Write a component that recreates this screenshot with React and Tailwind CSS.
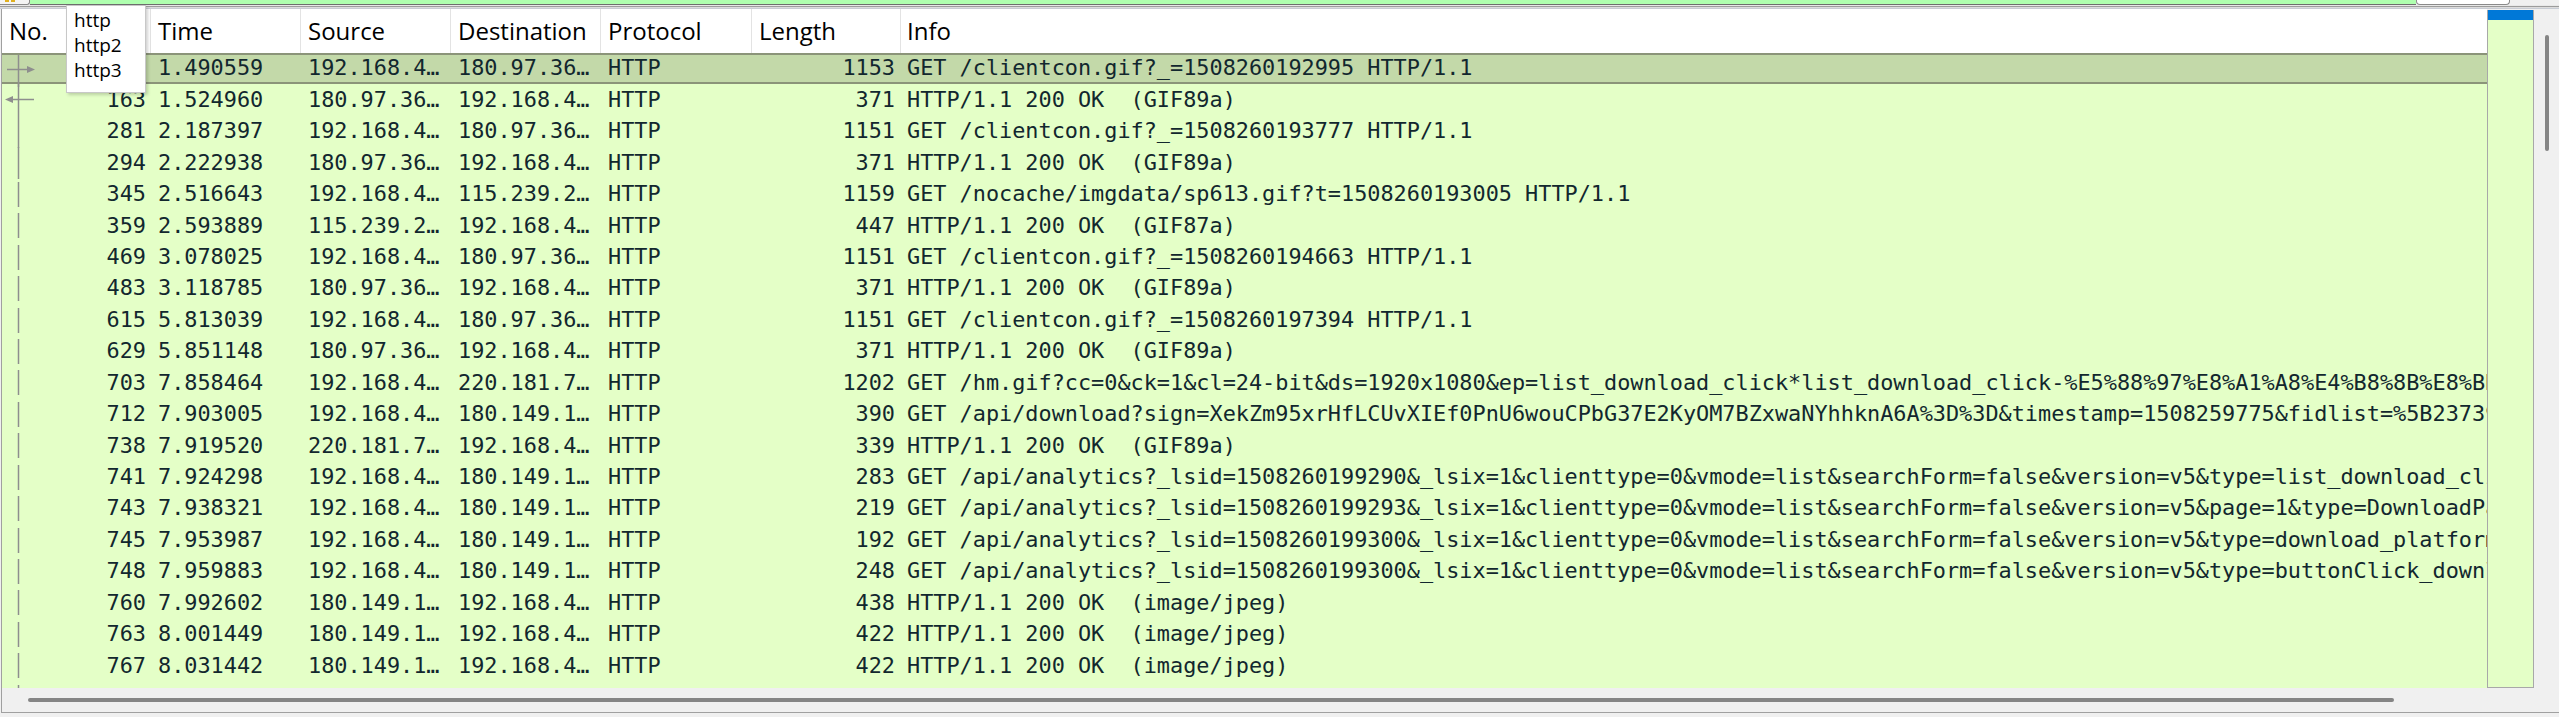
import React from 'react';

const mono = { fontFamily: '"DejaVu Sans Mono", "Liberation Mono", monospace' };
const sans = { fontFamily: '"Open Sans", "Noto Sans", sans-serif' };

const rows = [
  { no: '148', time: '1.490559', src: '192.168.4…', dst: '180.97.36…', len: '1153', info: 'GET /clientcon.gif?_=1508260192995 HTTP/1.1', sel: true, mark: 'req' },
  { no: '163', time: '1.524960', src: '180.97.36…', dst: '192.168.4…', len: '371', info: 'HTTP/1.1 200 OK  (GIF89a)', mark: 'resp' },
  { no: '281', time: '2.187397', src: '192.168.4…', dst: '180.97.36…', len: '1151', info: 'GET /clientcon.gif?_=1508260193777 HTTP/1.1', mark: 'line' },
  { no: '294', time: '2.222938', src: '180.97.36…', dst: '192.168.4…', len: '371', info: 'HTTP/1.1 200 OK  (GIF89a)', mark: 'line' },
  { no: '345', time: '2.516643', src: '192.168.4…', dst: '115.239.2…', len: '1159', info: 'GET /nocache/imgdata/sp613.gif?t=1508260193005 HTTP/1.1' },
  { no: '359', time: '2.593889', src: '115.239.2…', dst: '192.168.4…', len: '447', info: 'HTTP/1.1 200 OK  (GIF87a)' },
  { no: '469', time: '3.078025', src: '192.168.4…', dst: '180.97.36…', len: '1151', info: 'GET /clientcon.gif?_=1508260194663 HTTP/1.1' },
  { no: '483', time: '3.118785', src: '180.97.36…', dst: '192.168.4…', len: '371', info: 'HTTP/1.1 200 OK  (GIF89a)' },
  { no: '615', time: '5.813039', src: '192.168.4…', dst: '180.97.36…', len: '1151', info: 'GET /clientcon.gif?_=1508260197394 HTTP/1.1' },
  { no: '629', time: '5.851148', src: '180.97.36…', dst: '192.168.4…', len: '371', info: 'HTTP/1.1 200 OK  (GIF89a)' },
  { no: '703', time: '7.858464', src: '192.168.4…', dst: '220.181.7…', len: '1202', info: 'GET /hm.gif?cc=0&ck=1&cl=24-bit&ds=1920x1080&ep=list_download_click*list_download_click-%E5%88%97%E8%A1%A8%E4%B8%8B%E8%BD%BD%E6%8C%89%E9%92%AE&et=4&ja=0&ln=zh-cn HTTP/1.1' },
  { no: '712', time: '7.903005', src: '192.168.4…', dst: '180.149.1…', len: '390', info: 'GET /api/download?sign=XekZm95xrHfLCUvXIEf0PnU6wouCPbG37E2KyOM7BZxwaNYhhknA6A%3D%3D&timestamp=1508259775&fidlist=%5B237396527826153%5D&type=dlink HTTP/1.1' },
  { no: '738', time: '7.919520', src: '220.181.7…', dst: '192.168.4…', len: '339', info: 'HTTP/1.1 200 OK  (GIF89a)' },
  { no: '741', time: '7.924298', src: '192.168.4…', dst: '180.149.1…', len: '283', info: 'GET /api/analytics?_lsid=1508260199290&_lsix=1&clienttype=0&vmode=list&searchForm=false&version=v5&type=list_download_click HTTP/1.1' },
  { no: '743', time: '7.938321', src: '192.168.4…', dst: '180.149.1…', len: '219', info: 'GET /api/analytics?_lsid=1508260199293&_lsix=1&clienttype=0&vmode=list&searchForm=false&version=v5&page=1&type=DownloadPanel HTTP/1.1' },
  { no: '745', time: '7.953987', src: '192.168.4…', dst: '180.149.1…', len: '192', info: 'GET /api/analytics?_lsid=1508260199300&_lsix=1&clienttype=0&vmode=list&searchForm=false&version=v5&type=download_platform HTTP/1.1' },
  { no: '748', time: '7.959883', src: '192.168.4…', dst: '180.149.1…', len: '248', info: 'GET /api/analytics?_lsid=1508260199300&_lsix=1&clienttype=0&vmode=list&searchForm=false&version=v5&type=buttonClick_download HTTP/1.1' },
  { no: '760', time: '7.992602', src: '180.149.1…', dst: '192.168.4…', len: '438', info: 'HTTP/1.1 200 OK  (image/jpeg)' },
  { no: '763', time: '8.001449', src: '180.149.1…', dst: '192.168.4…', len: '422', info: 'HTTP/1.1 200 OK  (image/jpeg)' },
  { no: '767', time: '8.031442', src: '180.149.1…', dst: '192.168.4…', len: '422', info: 'HTTP/1.1 200 OK  (image/jpeg)' },
  { no: '771', time: '8.052310', src: '180.149.1…', dst: '192.168.4…', len: '422', info: 'HTTP/1.1 200 OK  (image/jpeg)' },
];

// related-packet marks drawn in the No. column
const Gutter = ({ mark }) => (
  <svg className="absolute left-0 top-0" width="40" height="32" viewBox="0 0 40 32">
    {mark ? (
      <line x1="16.5" y1="0" x2="16.5" y2="32" stroke="#8e8e8e" strokeWidth="1.5" />
    ) : (
      <line x1="16.5" y1="3" x2="16.5" y2="28" stroke="#8e8e8e" strokeWidth="1.5" />
    )}
    {mark === 'req' && (
      <>
        <line x1="5" y1="14.5" x2="27" y2="14.5" stroke="#8e8e8e" strokeWidth="1.5" />
        <path d="M25 11 L33 14.5 L25 18 Z" fill="#8e8e8e" />
      </>
    )}
    {mark === 'resp' && (
      <>
        <line x1="9" y1="15.5" x2="32" y2="15.5" stroke="#8e8e8e" strokeWidth="1.5" />
        <path d="M11 12 L3 15.5 L11 19 Z" fill="#8e8e8e" />
      </>
    )}
  </svg>
);

const Row = ({ r }) => (
  <div
    className={`flex h-[31.45px] items-center whitespace-pre text-[21.85px] text-[#12272e] ${
      r.sel ? 'bg-[#c3d9a9] border-y-2 border-[#8b9479]' : 'bg-[#e4ffc7]'
    }`}
    style={mono}
  >
    <div className="relative w-[149px] h-full flex items-center justify-end pr-[5px] shrink-0">
      <Gutter mark={r.mark} />
      <span>{r.no}</span>
    </div>
    <div className="w-[150px] pl-[7px] shrink-0 overflow-hidden">{r.time}</div>
    <div className="w-[150px] pl-[7px] shrink-0 overflow-hidden">{r.src}</div>
    <div className="w-[150px] pl-[7px] shrink-0 overflow-hidden">{r.dst}</div>
    <div className="w-[151px] pl-[7px] shrink-0 overflow-hidden">HTTP</div>
    <div className="w-[149px] pr-[6px] shrink-0 text-right overflow-hidden">{r.len}</div>
    <div className="flex-1 pl-[6px] overflow-hidden">{r.info}</div>
  </div>
);

const headers = [
  ['No.', 'w-[149px]'],
  ['Time', 'w-[150px]'],
  ['Source', 'w-[150px]'],
  ['Destination', 'w-[150px]'],
  ['Protocol', 'w-[151px]'],
  ['Length', 'w-[149px]'],
];

export default function App() {
  return (
    <div className="relative w-[2559px] h-[717px] overflow-hidden bg-[#f0f0f0]">
      {/* filter toolbar edge */}
      <div className="flex h-[5px]">
        <div className="relative w-[30px] h-full bg-[#f4f4f4] border-r border-b border-[#8a8a8a] rounded-br-[3px]">
          <div className="absolute left-[5px] top-0 w-[4px] h-[2px] bg-[#e0b020]" />
          <div className="absolute left-[11px] top-0 w-[4px] h-[2px] bg-[#e0b020]" />
        </div>
        <div className="flex-1 bg-[#afffaf] border-b border-[#6e6e6e]" />
        <div className="w-[94px] h-full bg-white border-x border-b border-[#8a8a8a] rounded-b-[4px]" />
        <div className="w-[49px] h-full bg-[#f0f0f0]" />
      </div>
      <div className="h-[1px] bg-[#e8e8e8]" />
      <div className="h-[1px] bg-[#9c9c9c]" />
      <div className="h-[1px] bg-[#dcdcdc]" />
      <div className="h-[1px] bg-[#c8ccd4]" />

      {/* packet list */}
      <div className="ml-[1px] border-l border-b border-[#a0a0a0] w-[2558px]">
        <div className="flex h-[679px]">
          <div className="flex-1 flex flex-col overflow-hidden bg-[#e4ffc7]">
            <div className="flex h-[44px] bg-white text-[24px] text-black shrink-0" style={sans}>
              {headers.map(([t, w]) => (
                <div key={t} className={`${w} h-full shrink-0 flex items-center pl-[7px] border-r border-[#e3e3e3]`}>
                  {t}
                </div>
              ))}
              <div className="flex-1 h-full flex items-center pl-[6px]">Info</div>
            </div>
            <div className="flex-1 overflow-hidden">
              {rows.map((r, i) => (
                <Row key={i} r={r} />
              ))}
            </div>
          </div>
          {/* minimap */}
          <div className="w-[47px] mt-[1px] bg-[#e4ffc7] border-x border-b border-[#a8a8a8] flex flex-col">
            <div className="h-[10px] bg-[#0078d7]" />
          </div>
          {/* vertical scrollbar */}
          <div className="w-[25px] bg-[#f0f0f0] pt-[26px] flex justify-center">
            <div className="w-[4px] h-[116px] rounded-full bg-[#858585] ml-[1px]" />
          </div>
        </div>
        {/* horizontal scrollbar */}
        <div className="h-[24px] bg-[#f0f0f0] flex items-center pl-[26px]">
          <div className="w-[2366px] h-[4px] rounded-full bg-[#858585]" />
        </div>
      </div>

      {/* filter completion popup */}
      <div
        className="absolute left-[66px] top-[5px] w-[80px] h-[88px] bg-white border border-[#c8c8c8] shadow-[2px_2px_3px_rgba(0,0,0,0.18)] pt-[2px] pl-[7px] text-[19px] leading-[25px] text-black"
        style={sans}
      >
        <div>http</div>
        <div>http2</div>
        <div>http3</div>
      </div>
    </div>
  );
}
